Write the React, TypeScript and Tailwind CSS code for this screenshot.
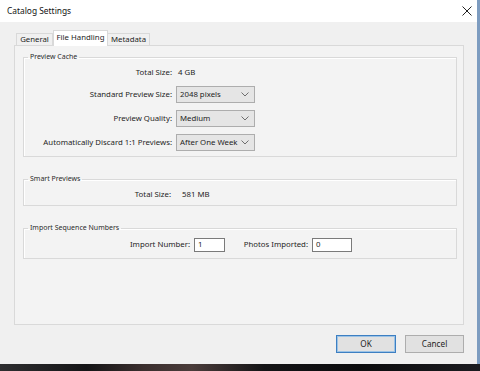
import React from "react";

function Chevron() {
  return (
    <svg width="8" height="5" viewBox="0 0 8 5" className="shrink-0">
      <polyline points="0.5,0.5 4,4 7.5,0.5" fill="none" stroke="#6e6e6e" strokeWidth="1" />
    </svg>
  );
}

function Select({ value }: { value: string }) {
  return (
    <div className="ml-[4px] w-[79px] h-[17px] bg-[#e5e5e5] border border-[#adadad] flex items-center justify-between pl-[3px] pr-[5px]">
      <span>{value}</span>
      <Chevron />
    </div>
  );
}

function Group({ title, className, children }: { title: string; className?: string; children: React.ReactNode }) {
  return (
    <fieldset className={"border border-[#d9d9d9] shadow-[inset_1px_1px_0_#ffffff] " + (className ?? "")}>
      <legend className="ml-[4px] px-[2px] h-[10px] leading-[10px] text-[7px] text-[#2a2a2a]">{title}</legend>
      {children}
    </fieldset>
  );
}

export default function App() {
  return (
    <div className="w-[480px] h-[371px] flex flex-col overflow-hidden font-['Noto_Sans',sans-serif] text-[7.8px] text-[#1e1e1e]">
      <div className="flex flex-1 min-h-0">
        <div className="flex-1 flex flex-col bg-[#f0f0f0]">
          <div className="h-[22px] bg-white flex items-center justify-between pl-[7px] pr-[5px]">
            <span className="text-[8.4px] text-[#111]">Catalog Settings</span>
            <svg width="10" height="10" viewBox="0 0 10 10">
              <path d="M0.5 0.5 L9.5 9.5 M9.5 0.5 L0.5 9.5" stroke="#222" strokeWidth="1" />
            </svg>
          </div>
          <div className="flex-1 flex flex-col pl-[14px] pr-[13px] pt-[8px]">
            <div className="flex items-start pl-[2px] h-[15px] relative z-10">
              <div className="mt-[3px] w-[37px] h-[12px] border border-b-0 border-[#d9d9d9] bg-[#f0f0f0] flex items-center justify-center">General</div>
              <div className="w-[55px] h-[16px] border border-b-0 border-[#d9d9d9] bg-white flex items-center justify-center pb-[1px]">File Handling</div>
              <div className="mt-[3px] w-[42px] h-[12px] border border-b-0 border-l-0 border-[#d9d9d9] bg-[#f0f0f0] flex items-center justify-center">Metadata</div>
            </div>
            <div className="h-[280px] border border-[#d9d9d9] bg-[#f3f3f3] pl-[8px] pr-[6px] pt-[6px] flex flex-col">
              <Group title="Preview Cache" className="pb-[5px]">
                <div className="mt-[3px] h-[16px] flex items-center">
                  <div className="w-[148px] text-right">Total Size:</div>
                  <div className="ml-[6px]">4 GB</div>
                </div>
                <div className="mt-[5px] flex items-center">
                  <div className="w-[148px] text-right">Standard Preview Size:</div>
                  <Select value="2048 pixels" />
                </div>
                <div className="mt-[7px] flex items-center">
                  <div className="w-[148px] text-right">Preview Quality:</div>
                  <Select value="Medium" />
                </div>
                <div className="mt-[7px] flex items-center">
                  <div className="w-[148px] text-right">Automatically Discard 1:1 Previews:</div>
                  <Select value="After One Week" />
                </div>
              </Group>
              <Group title="Smart Previews" className="mt-[17px] pb-[2px]">
                <div className="mt-[3px] h-[16px] flex items-center">
                  <div className="w-[147px] text-right">Total Size:</div>
                  <div className="ml-[11px]">581 MB</div>
                </div>
              </Group>
              <Group title="Import Sequence Numbers" className="mt-[17px] pb-[6px]">
                <div className="mt-[5px] flex items-center">
                  <div className="w-[166px] text-right">Import Number:</div>
                  <div className="ml-[4px] w-[31px] h-[14px] bg-white border border-[#7a7a7a] flex items-center pl-[3px]">1</div>
                  <div className="w-[83px] text-right">Photos Imported:</div>
                  <div className="ml-[4px] w-[40px] h-[14px] bg-white border border-[#7a7a7a] flex items-center pl-[3px]">0</div>
                </div>
              </Group>
            </div>
            <div className="mt-[10px] flex justify-end gap-[9px]">
              <div className="w-[60px] h-[18px] bg-[#e1e1e1] border border-[#3d7fc2] shadow-[inset_0_0_0_1px_#9cc3e6] flex items-center justify-center text-[8.2px]">OK</div>
              <div className="w-[59px] h-[18px] bg-[#e1e1e1] border border-[#adadad] flex items-center justify-center text-[8.2px]">Cancel</div>
            </div>
          </div>
        </div>
        <div className="w-[3px] bg-[#7d9cc0]" />
      </div>
      <div className="h-[7px] bg-[linear-gradient(90deg,#2e2e30_0%,#151517_18%,#3b2f2e_30%,#4a3c3a_40%,#141416_55%,#0c0c0e_75%,#1c1c20_100%)]" />
    </div>
  );
}
